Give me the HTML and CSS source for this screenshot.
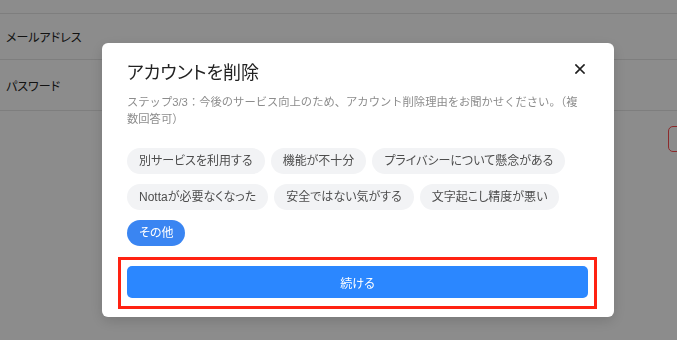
FILE: index.html
```html
<!DOCTYPE html>
<html lang="ja">

<head>
    <meta charset="UTF-8">
    <meta name="viewport" content="width=device-width, initial-scale=1.0">
    <title>アカウントを削除</title>
    <link rel="stylesheet" href="styles.css">
</head>

<body>
    <!-- 背景の設定ページ -->
    <div class="page">
        <div class="row row-top"></div>
        <div class="row row-mail"><span>メールアドレス</span></div>
        <div class="row row-pass"><span>パスワード</span></div>
        <div class="row-action">
            <button class="danger-btn"></button>
        </div>
    </div>

    <!-- 削除モーダル -->
    <div class="overlay">
        <div class="modal">
            <header class="modal-header">
                <h2>アカウントを削除</h2>
                <button class="close-btn" aria-label="閉じる">
                    <svg width="10" height="10" viewBox="0 0 10 10">
                        <path d="M1 1 L9 9 M9 1 L1 9" stroke="#1f1f1f" stroke-width="1.7" stroke-linecap="square" fill="none" />
                    </svg>
                </button>
            </header>
            <p class="modal-desc">ステップ3/3：今後のサービス向上のため、アカウント削除理由をお聞かせください。（複数回答可）</p>

            <div class="reasons">
                <span class="chip">別サービスを利用する</span>
                <span class="chip">機能が不十分</span>
                <span class="chip">プライバシーについて懸念がある</span>
                <span class="chip">Nottaが必要なくなった</span>
                <span class="chip">安全ではない気がする</span>
                <span class="chip">文字起こし精度が悪い</span>
                <span class="chip active">その他</span>
            </div>

            <!-- 赤枠で囲まれた続けるボタン -->
            <div class="continue-frame">
                <button class="continue-btn">続ける</button>
            </div>
        </div>
    </div>
</body>

</html>
```

FILE: styles.css
```css
/* 基本 */
body {
    margin: 0;
    padding: 0;
    overflow: hidden;
    background-color: #fff;
    color: #222;
    font-family: "Liberation Sans", "Noto Sans CJK JP", sans-serif;
    font-feature-settings: "palt";
}

button {
    font-family: inherit;
    font-feature-settings: inherit;
}

/* 背景ページ */
.row {
    display: flex;
    align-items: center;
    padding-left: 6px;
    border-bottom: 1px solid #e6e6e6;
    font-size: 12px;
}

.row-top {
    height: 13px;
}

.row-mail {
    height: 45px;
}

.row-pass {
    height: 50px;
}

.row-action {
    display: flex;
    justify-content: flex-end;
    padding-top: 15px;
}

.danger-btn {
    width: 40px;
    height: 26px;
    margin-right: -31px;
    background: #fff;
    border: 1px solid #ff4d4f;
    border-radius: 5px;
}

/* モーダル */
.overlay {
    position: fixed;
    inset: 0;
    background-color: rgba(0, 0, 0, 0.45);
    padding: 43px 0 0 102px;
}

.modal {
    box-sizing: border-box;
    width: 512px;
    background-color: #fff;
    border-radius: 6px;
    box-shadow: 0 4px 14px rgba(0, 0, 0, 0.15);
    padding: 18px 26px 8px 25px;
}

.modal-header {
    display: flex;
    justify-content: space-between;
    align-items: center;
}

.modal-header h2 {
    margin: 0;
    font-size: 18px;
    line-height: 24px;
    font-weight: 400;
    color: #222;
}

.close-btn {
    display: flex;
    align-items: center;
    justify-content: center;
    width: 14px;
    height: 14px;
    margin-top: -8px;
    margin-right: 1px;
    padding: 0;
    border: none;
    background: none;
}

.modal-desc {
    margin: 9px 0 0;
    font-size: 11.3px;
    line-height: 17px;
    color: #8c8c8c;
    font-feature-settings: normal;
}

/* 理由の選択肢 */
.reasons {
    display: flex;
    flex-wrap: wrap;
    gap: 10px 6px;
    margin-top: 20px;
}

.chip {
    height: 26px;
    line-height: 26px;
    padding: 0 12px;
    border-radius: 13px;
    background-color: #f2f3f5;
    color: #4d4d4d;
    font-size: 12px;
}

.chip.active {
    background-color: #3a85f2;
    color: #fff;
}

.continue-frame {
    margin: 11px -9px 0;
    padding: 6px 6px 8px;
    border: 3px solid #ff2212;
}

.continue-btn {
    display: block;
    width: 100%;
    height: 32px;
    border: none;
    border-radius: 5px;
    background-color: #2b87ff;
    color: #fff;
    font-size: 12px;
}
```
